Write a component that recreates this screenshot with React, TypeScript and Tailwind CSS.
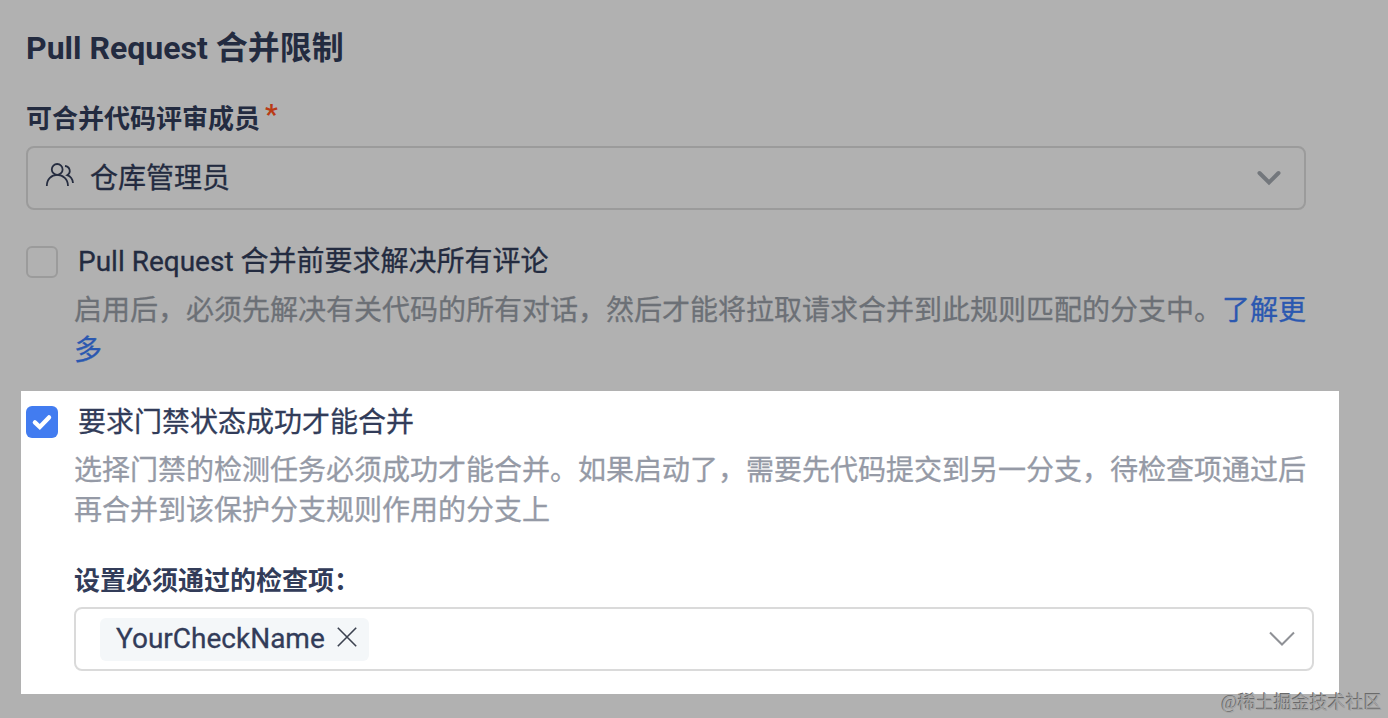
import type { ReactNode } from 'react'

function Check({ checked }: { checked?: boolean }) {
  if (!checked) {
    return <span className="w-8 h-8 shrink-0 rounded-md border-2 border-[#9b9b9b]" />
  }
  return (
    <span className="w-8 h-8 shrink-0 rounded-md bg-[#427cf0]">
      <svg viewBox="0 0 32 32" className="w-8 h-8" fill="none" stroke="#fff" strokeWidth="4.4" strokeLinecap="round" strokeLinejoin="miter">
        <path d="M8.9 16.4L13.8 21L23 11.4" />
      </svg>
    </span>
  )
}

interface OptionProps {
  title: string
  checked?: boolean
  titleClass: string
  descClass: string
  children: ReactNode
}

function Option({ title, checked, titleClass, descClass, children }: OptionProps) {
  return (
    <div>
      <label className="flex items-center gap-5 h-8">
        <Check checked={checked} />
        <span className={`text-[28px] leading-8 [-webkit-text-stroke:0.3px] ${titleClass}`}>{title}</span>
      </label>
      <p className={`mt-[13px] ml-12 w-[1240px] text-[28px] leading-10 [-webkit-text-stroke:0.3px] ${descClass}`}>{children}</p>
    </div>
  )
}

export default function App() {
  return (
    <main className="relative w-[1388px] h-[718px] overflow-hidden bg-[#b1b1b1] font-['Roboto','Noto_Sans_CJK_SC',sans-serif]">
      {/* Merge permission */}
      <section className="pt-7 pl-[26px] w-[1306px]">
        <h2 className="text-[32px] leading-10 font-bold text-[#232b40]">Pull Request 合并限制</h2>
        <div className="mt-[31px] flex gap-[5px] text-[26px] leading-10 font-bold text-[#232b40]">
          <span>可合并代码评审成员</span>
          <span className="-mt-1 h-10 text-[28px] text-[#b93a16]">*</span>
        </div>
        <div className="mt-[7px] h-16 flex items-center rounded-lg border-2 border-[#9b9b9b] pl-[17px] pr-[22px]">
          <svg viewBox="0 0 30 26" className="w-[30px] h-[26px] -mt-1.5" fill="none" stroke="#262d40" strokeWidth="1.8">
            <circle cx="12.2" cy="7.4" r="5.4" />
            <path d="M1.8 24C1.8 17 6.5 12.9 12.2 12.9S23 17 23 24" />
            <path d="M20 4C25.2 4.6 26.4 10.6 22.2 13.2C25.5 14.4 27.6 17 28 21" />
          </svg>
          <span className="ml-[15px] pt-0.5 text-[28px] leading-10 text-[#232b40] [-webkit-text-stroke:0.3px]">仓库管理员</span>
          <svg viewBox="0 0 26 18" className="ml-auto w-[26px] h-[18px]" fill="none" stroke="#73777c" strokeWidth="4" strokeLinecap="round" strokeLinejoin="miter">
            <path d="M3.5 4L13 13.5L22.5 4" />
          </svg>
        </div>
      </section>

      <section className="mt-9 pl-[26px]">
        <Option title="Pull Request 合并前要求解决所有评论" titleClass="text-[#232b40]" descClass="text-[#6c7076]">
          启用后，必须先解决有关代码的所有对话，然后才能将拉取请求合并到此规则匹配的分支中。
          <a href="#" className="text-[#2b58b0]">了解更多</a>
        </Option>
      </section>

      {/* Status checks */}
      <section className="mt-5 ml-[21px] w-[1318px] h-[303px] bg-white pt-[15px] pl-[5px]">
        <Option checked title="要求门禁状态成功才能合并" titleClass="pt-px text-[#323c59]" descClass="text-[#959aa6]">
          选择门禁的检测任务必须成功才能合并。如果启动了，需要先代码提交到另一分支，待检查项通过后再合并到该保护分支规则作用的分支上
        </Option>
        <div className="ml-12 mt-[30px] w-[1240px]">
          <h3 className="text-[26px] leading-10 font-bold text-[#323c59]">设置必须通过的检查项：</h3>
          <div className="mt-1.5 h-16 flex items-center rounded-lg border-2 border-[#dadada] pl-6 pr-[17px]">
            <span className="h-[43px] w-[269px] flex items-center rounded-md bg-[#f4f7f9] pl-4 text-[28px] text-[#323c59] [-webkit-text-stroke:0.3px]">
              YourCheckName
              <svg viewBox="0 0 20 20" className="ml-3 -mt-1 w-5 h-5" fill="none" stroke="#3c4250" strokeWidth="1.6">
                <path d="M.8 .8L19.2 19.2M19.2 .8L.8 19.2" />
              </svg>
            </span>
            <svg viewBox="0 0 26 16" className="ml-auto w-[26px] h-4" fill="none" stroke="#8f9196" strokeWidth="2">
              <path d="M1 1.5L13 13.5L25 1.5" />
            </svg>
          </div>
        </div>
      </section>

      <span className="absolute right-1.5 bottom-[3px] text-lg leading-6 text-[#a2a2a2] [text-shadow:-1px_-1px_0_#6a6a6a] font-['Liberation_Serif','Noto_Sans_CJK_SC',serif]">
        @稀土掘金技术社区
      </span>
    </main>
  )
}
